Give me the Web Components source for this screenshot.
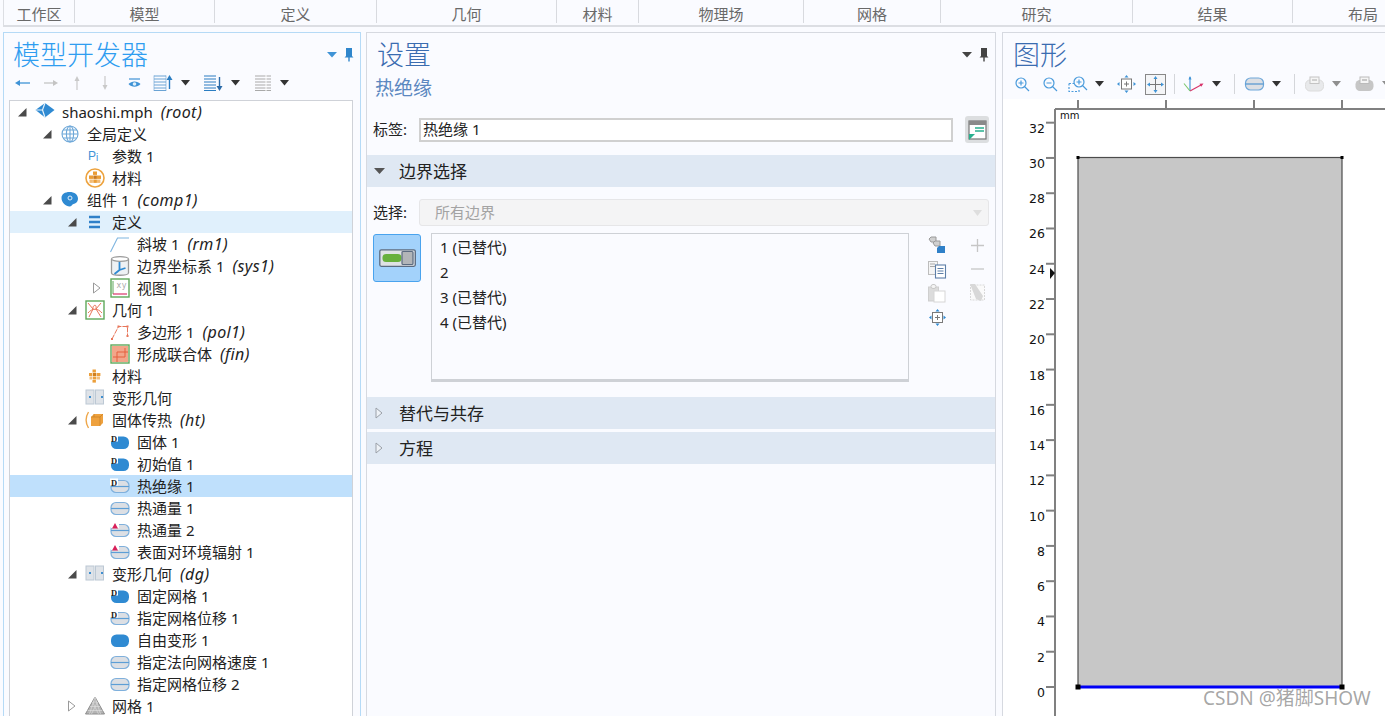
<!DOCTYPE html>
<html lang="zh-CN">
<head>
<meta charset="utf-8">
<title>模型开发器</title>
<style>
  html, body { margin: 0; height: 716px; overflow: hidden; background: #fafbff; }
  body { font: 15px "Noto Sans", "Noto Sans CJK SC", sans-serif; color: #222; position: relative; }
  .work { display: flex; gap: 5px; padding: 5px 0 0 3px; height: 684px; }
  .mark { position: absolute; left: 1203px; top: 683px; font-size: 19px; color: rgba(110,110,110,.62); white-space: nowrap; }
</style>
</head>
<body>
<x-ribbon></x-ribbon>
<div class="work">
  <x-panel heading="模型开发器" active style="width:358px">
    <x-iconbar slot="bar" items="back:15:14 fwd:14:14:14 up:10:14:14 down:10:14:18 eye:13:14:18 listup:20:16:12 drop:9:14:8 listdown:20:16:13 drop:9:14:8 listgray:16:16:15 drop:9:14:9"></x-iconbar>
    <x-tree>
      <x-node level="0" state="open" icon="doc">shaoshi.mph<span slot="tag">(root)</span></x-node>
      <x-node level="1" state="open" icon="globe">全局定义</x-node>
      <x-node level="2" icon="pi">参数 1</x-node>
      <x-node level="2" icon="matring">材料</x-node>
      <x-node level="1" state="open" icon="comp">组件 1<span slot="tag">(comp1)</span></x-node>
      <x-node level="2" state="open" icon="defs" sel="soft">定义</x-node>
      <x-node level="3" icon="ramp">斜坡 1<span slot="tag">(rm1)</span></x-node>
      <x-node level="3" icon="sys">边界坐标系 1<span slot="tag">(sys1)</span></x-node>
      <x-node level="3" state="closed" icon="view">视图 1</x-node>
      <x-node level="2" state="open" icon="geom">几何 1</x-node>
      <x-node level="3" icon="poly">多边形 1<span slot="tag">(pol1)</span></x-node>
      <x-node level="3" icon="union">形成联合体<span slot="tag">(fin)</span></x-node>
      <x-node level="2" icon="mat">材料</x-node>
      <x-node level="2" icon="deform">变形几何</x-node>
      <x-node level="2" state="open" icon="heat">固体传热<span slot="tag">(ht)</span></x-node>
      <x-node level="3" icon="dfill">固体 1</x-node>
      <x-node level="3" icon="dfill">初始值 1</x-node>
      <x-node level="3" icon="dbound" sel="strong">热绝缘 1</x-node>
      <x-node level="3" icon="bound">热通量 1</x-node>
      <x-node level="3" icon="rbound">热通量 2</x-node>
      <x-node level="3" icon="rbound">表面对环境辐射 1</x-node>
      <x-node level="2" state="open" icon="deform">变形几何<span slot="tag">(dg)</span></x-node>
      <x-node level="3" icon="dfill">固定网格 1</x-node>
      <x-node level="3" icon="dbound">指定网格位移 1</x-node>
      <x-node level="3" icon="fill">自由变形 1</x-node>
      <x-node level="3" icon="bound">指定法向网格速度 1</x-node>
      <x-node level="3" icon="bound">指定网格位移 2</x-node>
      <x-node level="2" state="closed" icon="mesh">网格 1</x-node>
    </x-tree>
  </x-panel>
  <x-panel heading="设置" tone="dark" style="width:630px;margin-right:1px">
    <x-settings></x-settings>
  </x-panel>
  <x-panel heading="图形" tone="dark" plain style="flex:1">
    <x-iconbar slot="bar" wide items="zoomin:14:14:12 zoomout:14:14:14 zoombox:19:16:11 drop:9:14:8 pan:19:18:13 extents:21:21:9 sep:1:20:8 axes:21:16:8 drop:9:14:8 sep:1:20:13 tbound:19:14:10 drop:9:14:8 sep:1:20:13 pgray:19:14:10 dropg:9:14:8 pdark:19:14:14 dropg:9:14:8"></x-iconbar>
    <x-plot></x-plot>
  </x-panel>
</div>
<div class="mark">CSDN @猪脚SHOW</div>

<script>
// all icons live here, drawn on a 20x20 box unless the entry says otherwise
const BOUND_BODY = `<rect x="1" y="4.500" width="18" height="12" rx="5" fill="#dcdfe4" stroke="#7fb0dc" stroke-width="1.200"/><path d="M1 10.500h18" stroke="#5d9ed6" stroke-width="1.200"/>`;
const FILL_BODY = `<rect x="1" y="4.500" width="18" height="12.500" rx="5.500" fill="#2f8ad2"/>`;
const D_MARK = `<rect x="0" y="2.500" width="8" height="7" fill="#fff"/><text x="1" y="9.500" font-family="Liberation Serif" font-weight="700" font-size="8.500" fill="#222">D</text>`;
const ICONS = {
  doc: `<path d="M10 1 19.500 8 10 15.500.5 8z" fill="#2f8ad2"/><path d="M.5 8 7.500 8 10 1M7.500 8 10 15.500" fill="none" stroke="#e6f2fb" stroke-width="1.200"/>`,
  globe: `<g fill="none" stroke="#6da7d8" stroke-width="1.100"><circle cx="10" cy="10" r="8"/><ellipse cx="10" cy="10" rx="3.600" ry="8"/><path d="M2 10h16M3.200 6h13.600M3.200 14h13.600M10 2v16"/></g>`,
  pi: `<text x="3" y="14" font-family="Liberation Sans" font-size="12" fill="#3f93d6">P</text><text x="11" y="15" font-family="Liberation Sans" font-size="10" fill="#3f93d6">i</text>`,
  matring: `<circle cx="10" cy="10" r="9" fill="#fff" stroke="#eda33f" stroke-width="1.600"/><g fill="#ea9c34"><rect x="8" y="3.500" width="4" height="3.400"/><rect x="4" y="7.500" width="4" height="3.400"/><rect x="8.300" y="7.500" width="3.600" height="3.400" fill="#c9791e"/><rect x="12" y="7.500" width="4" height="3.400"/><rect x="4.500" y="11.500" width="3.400" height="3.400" fill="#f2bb75"/><rect x="8.300" y="11.500" width="3.600" height="3.400"/><rect x="12" y="11.500" width="3.400" height="3.400" fill="#f2bb75"/></g>`,
  mat: `<g fill="#ec9f3a"><rect x="7.500" y="3.500" width="3.400" height="3"/><rect x="4" y="7" width="3.400" height="3"/><rect x="8" y="7" width="3.400" height="3" fill="#d07f1e"/><rect x="12" y="7" width="3.400" height="3"/><rect x="4.500" y="10.500" width="3" height="3" fill="#f3bf7e"/><rect x="8" y="10.500" width="3.400" height="3"/><rect x="12" y="10.500" width="3" height="3" fill="#f3bf7e"/><rect x="7.500" y="14" width="3.400" height="2.600"/></g>`,
  comp: `<path d="M1.500 8C1.500 4 5 2 9.500 2c5 0 8.500 2.700 8.500 6.500 0 3.500-2.500 5-4.500 5.500-1.500.4-2 2.500-4 2.500C6 16.500 1.500 12.500 1.500 8z" fill="#2f8ad2"/><rect x="8" y="6" width="4" height="4" rx="2" fill="none" stroke="#dcecf9" stroke-width="1"/>`,
  defs: `<path d="M4 5h11M4 10h11M4 15h11" stroke="#2f80c8" stroke-width="2.600"/>`,
  ramp: `<path d="M.5 18 7.500 4H19" fill="none" stroke="#7fb5e0" stroke-width="1.100"/>`,
  sys: `<path d="M1.500 3v14c0 3 17 3 17 0V3" fill="#eef1f4" stroke="#9a9a9a" stroke-width="1.300"/><ellipse cx="10" cy="3" rx="8.500" ry="2.300" fill="#fff" stroke="#9a9a9a" stroke-width="1.300"/><path d="M9.500 6v8M9.500 14l-5 4M9.500 14l6-2" stroke="#2f8ad2" stroke-width="1.800" fill="none"/>`,
  view: `<rect x="1" y="1" width="18" height="18" fill="#fff" stroke="#5fa85a" stroke-width="1.400"/><path d="M3 3v13" stroke="#5fa85a"/><path d="M3 16h14" stroke="#d8336a" stroke-width="1.200"/><text x="6.500" y="10" font-family="DejaVu Sans" font-size="8" letter-spacing=".5" fill="#aaa">xy</text>`,
  geom: `<rect x="1" y="1" width="18" height="18" fill="#fff" stroke="#5fa85a" stroke-width="1.400"/><path d="M3 3l5 6-4 8M16 3l-5 6 5 8M8 9c-.7-4 4-6 3 0M3 13c4-5 10-5 14 0" fill="none" stroke="#e8765a" stroke-width="1"/>`,
  poly: `<path d="M2 17 8.500 4.500H17.500V14" fill="none" stroke="#e8765a" stroke-width="1" stroke-dasharray="5 1"/><g fill="#e8765a"><rect x="1" y="16" width="2" height="2"/><rect x="7.500" y="3.500" width="2" height="2"/><rect x="16.500" y="3.500" width="2" height="2"/><rect x="16.500" y="13" width="2" height="2"/></g>`,
  union: `<rect x="1" y="1" width="18" height="18" fill="#fff" stroke="#5fa85a" stroke-width="1.400"/><rect x="2" y="2" width="16" height="16" fill="#f2a68a"/><path d="M3 13H15V4M7 18V8h11" fill="none" stroke="#e5603f" stroke-width="1"/>`,
  deform: `<rect x="1" y="2" width="8" height="14" fill="#dfe3e8" stroke="#bcc8d4"/><rect x="10.500" y="2" width="8" height="14" fill="#dfe3e8" stroke="#bcc8d4"/><rect x="4" y="8" width="2" height="2" fill="#3f8fd0"/><rect x="16" y="8" width="2" height="2" fill="#3f8fd0"/>`,
  heat: `<path d="M3.500 2C.5 7 .5 13 3.500 18" fill="none" stroke="#eea74a" stroke-width="1.400"/><path d="M6 7 9 4h9v9l-3 3H6z" fill="#eea13e" /><path d="M6 7h9v9M15 7l3-3M9 4v3" fill="none" stroke="#c77f22" stroke-width=".7"/>`,
  bound: BOUND_BODY,
  tbound: `<rect x=".5" y="1" width="18" height="12" rx="5" fill="#dcdfe4" stroke="#6fa8da" stroke-width="1.200"/><path d="M.5 7h18" stroke="#4f94d0" stroke-width="1.200"/>`,
  fill: FILL_BODY,
  dfill: FILL_BODY + D_MARK,
  dbound: BOUND_BODY + D_MARK,
  rbound: BOUND_BODY + `<rect x="1" y="3" width="8" height="5" fill="#fff"/><path d="M2 8.500 5 3l3 5.500z" fill="#d8205a"/>`,
  mesh: `<path d="M10 1 19.500 18H.5z" fill="#b4b4b4" stroke="#8d8d8d"/><path d="M7.500 6h5M5 10.500h10M2.500 14.500h15M10 1 4.500 18M10 1l5.500 17M7.500 6l6 12M12.500 6l-6 12" stroke="#e3e3e3" stroke-width=".6"/>`,

  back: `<path d="M2 7h13" stroke="#3f93d6" stroke-width="1.300"/><path d="M0 7l5-3v6z" fill="#3f93d6"/>`,
  fwd: `<path d="M0 7h12" stroke="#c4c4c4" stroke-width="1.300"/><path d="M14 7 9 4v6z" fill="#c4c4c4"/>`,
  up: `<path d="M5 2v12" stroke="#c9c9c9" stroke-width="1.200"/><path d="M5 0 2.500 5h5z" fill="#c9c9c9"/>`,
  down: `<path d="M5 0v12" stroke="#c9c9c9" stroke-width="1.200"/><path d="M5 14 2.500 9h5z" fill="#c9c9c9"/>`,
  eye: `<path d="M1 3h11" stroke="#3f93d6" stroke-width="1.200"/><path d="M.5 8c3-3.500 9-3.500 12 0-3 3.500-9 3.500-12 0z" fill="#3f93d6"/><circle cx="6.500" cy="8" r="1.800" fill="#dff0fb"/>`,
  listup: `<path d="M1 1h12M1 4h12M1 7h12M1 10h12M1 13h12M1 15.500h12" stroke="#6aa3d4" stroke-width="1"/><path d="M1 .5v15.500M13 .5v15.500" stroke="#6aa3d4" stroke-width=".6"/><path d="M16.500 4v10" stroke="#2a7dc2" stroke-width="1.400"/><path d="M16.500 0l-3 5h6z" fill="#2a7dc2"/>`,
  listdown: `<path d="M1 1h12M1 4h12M1 7h12M1 10h12M1 13h12M1 15.500h12" stroke="#2a7dc2" stroke-width="1.200"/><path d="M16.500 2v10" stroke="#2a6aa8" stroke-width="1.400"/><path d="M16.500 16l-3-5h6z" fill="#2a6aa8"/>`,
  listgray: `<path d="M0 1h16M0 4h16M0 7h16M0 10h16M0 13h16M0 15.500h16" stroke="#a9a9a9" stroke-width="1.200"/><path d="M11 0v16" stroke="#fff" stroke-width="1"/>`,
  drop: `<path d="M0 4h9L4.500 9.500z" fill="#333"/>`,
  dropg: `<path d="M0 4h9L4.500 9.500z" fill="#8f8f8f"/>`,
  dropblue: `<path d="M0 1h10L5 6.500z" fill="#3f93d6"/>`,
  dropdark: `<path d="M0 1h10L5 6.500z" fill="#444"/>`,
  pinblue: `<path d="M2 0h6v8l1.500 1.500H.5L2 8zM4.300 9h1.400v4.500H4.300z" fill="#2f86cc"/>`,
  pindark: `<path d="M2 0h6v8l1.500 1.500H.5L2 8zM4.300 9h1.400v4.500H4.300z" fill="#444"/>`,

  zoomin: `<g fill="none" stroke="#4a9bdc" stroke-width="1.200"><circle cx="6" cy="6" r="5"/><path d="M9.500 9.500 14 14M3.500 6h5M6 3.500v5"/></g>`,
  zoomout: `<g fill="none" stroke="#4a9bdc" stroke-width="1.200"><circle cx="6" cy="6" r="5"/><path d="M9.500 9.500 14 14M3.500 6h5"/></g>`,
  zoombox: `<g fill="none" stroke="#4a9bdc" stroke-width="1.200"><path d="M1 7.500h5M1 7.500v8h10v-3" stroke-dasharray="2 1.500"/><circle cx="11" cy="6" r="5"/><path d="M14.500 9.500 19 14M8.500 6h5M11 3.500v5"/></g>`,
  pan: `<rect x="4.500" y="4" width="10" height="10" fill="#fff" stroke="#777"/><path d="M7 9h5M9.500 6.500v5" stroke="#777"/><path d="M9.500 0 7.500 2.500h4zM9.500 18l-2-2.500h4zM0 9l2.500-2v4zM19 9l-2.500-2v4z" fill="#3f93d6"/>`,
  extents: `<rect x=".5" y=".5" width="20" height="20" fill="#f4f5f7" stroke="#888"/><path d="M10.500 4v13M4 10.500h13" stroke="#777"/><path d="M10.500 2 8.500 5h4zM10.500 19l-2-3h4zM2 10.500l3-2v4zM19 10.500l-3-2v4z" fill="#3f93d6"/>`,
  sep: `<path d="M.5 0v20" stroke="#d4d6da"/>`,
  axes: `<path d="M7 15V1" stroke="#3f93d6" stroke-width="1.100"/><path d="M7 0 5.500 3.500h3z" fill="#3f93d6"/><path d="M7 15 18 9" stroke="#d8336a" stroke-width="1.100"/><path d="M20.500 7.500l-4 .2 1.700 3z" fill="#d8336a"/><path d="M7 15 1 7.500" stroke="#7cc66c" stroke-width="1.100"/>`,
  pgray: `<rect x=".5" y="3" width="18" height="11" rx="4.500" fill="#e8e9eb" stroke="#dcdcdc"/><rect x="5" y="0" width="9" height="6.500" fill="#f5f5f5" stroke="#c4c4c4"/><path d="M7 3h5" stroke="#aaa"/>`,
  pdark: `<rect x=".5" y="3" width="18" height="11" rx="4.500" fill="#c6c6c6"/><rect x="5" y="0" width="9" height="6.500" fill="#f5f5f5" stroke="#bbb"/><path d="M7 3h5" stroke="#999"/>`,

  comment: `<rect x="3" y="3" width="17" height="18" fill="#fff" stroke="#777" stroke-width="1.200"/><rect x="3" y="3" width="17" height="4" fill="#8a8a8a"/><path d="M9 10h9M9 13h9" stroke="#28b08e" stroke-width="1.300"/><path d="M3 22v-6h6z" fill="#28b08e"/>`,
  toggle: `<rect x=".8" y=".8" width="35.500" height="16.500" rx="1.500" fill="#dfe2e4" stroke="#5b6b80" stroke-width="1.300"/><rect x="3.500" y="5" width="19" height="8" rx="3.500" fill="#68b03c"/><rect x="23" y="2.500" width="11" height="13" rx="1" fill="#b2b5b8" stroke="#5b6b80" stroke-width="1.200"/>`,
  stack: `<g stroke="#9a9a9a" fill="#d0d0d0"><path d="M1 3 3 1h5v5H3z"/><path d="M5 7l2-2h5v5H7z"/></g><path d="M9 12l2-2h6v7h-6l-2 0z" fill="#2f80c8"/>`,
  copy: `<rect x=".5" y=".5" width="9" height="13" fill="#f5f5f5" stroke="#bdbdbd"/><path d="M2 3h5M2 5.500h5" stroke="#aaa"/><rect x="7.500" y="4" width="10" height="13" fill="#fff" stroke="#5d7fa8" stroke-width="1.100"/><path d="M9.500 7.500h6M9.500 10h6M9.500 12.500h6" stroke="#5d7fa8"/>`,
  paste: `<rect x=".5" y="3" width="10" height="14" fill="#dcdcdc" stroke="#cfcfcf"/><rect x="3" y=".5" width="5" height="4" rx="2" fill="#f4f4f4" stroke="#c8c8c8"/><rect x="6" y="7" width="11" height="11" fill="#fff" stroke="#d6d6d6"/>`,
  plus: `<path d="M6.500 0v13M0 6.500h13" stroke="#c6c6c6" stroke-width="1.300"/>`,
  minus: `<path d="M0 2h13" stroke="#c6c6c6" stroke-width="1.300"/>`,
  wipe: `<rect x="1.500" y="1" width="14" height="15" fill="#fafafa" stroke="#d8d8d8" stroke-dasharray="2 1"/><path d="M1 0 6 0 14 12l-2 5-5-2z" fill="#d8d8d8"/>`,
  move: `<rect x="3.500" y="3.500" width="10" height="10" fill="#fff" stroke="#7a7a7a"/><path d="M6 8.500h5M8.500 6v5" stroke="#7a7a7a"/><path d="M8.500 0 6.500 2.500h4zM8.500 17l-2-2.500h4zM0 8.500l2.500-2v4zM17 8.500l-2.500-2v4z" fill="#2f8ad2"/>`
};

class XIco extends HTMLElement {
  connectedCallback() {
    const name = this.getAttribute("name");
    const w = +this.getAttribute("w") || 20;
    const h = +this.getAttribute("h") || 20;
    if (!this.shadowRoot) this.attachShadow({ mode: "open" });
    this.shadowRoot.innerHTML = `
      <style>:host { display: inline-flex; flex: none; } svg { display: block; overflow: visible; }</style>
      <svg width="${w}" height="${h}" viewBox="0 0 ${w} ${h}">${ICONS[name] || ""}</svg>`;
  }
}
customElements.define("x-ico", XIco);

class XRibbon extends HTMLElement {
  constructor() {
    super();
    this.attachShadow({ mode: "open" });
    const tabs = [["工作区",71],["模型",140],["定义",162],["几何",180],["材料",82],["物理场",165],["网格",137],["研究",192],["结果",160],["布局",140]];
    this.shadowRoot.innerHTML = `
      <style>
        :host { display: flex; height: 27px; box-sizing: border-box; margin-left: 3px; overflow: hidden;
                border-bottom: 2px solid #dcdee3; border-left: 1px solid #dcdee3; color: #696969; }
        div { box-sizing: border-box; height: 23px; line-height: 28px; text-align: center; border-right: 1px solid #d8dadf; flex: none; }
        div:last-child { border-right: 0; }
      </style>
      ${tabs.map(([t, w]) => `<div style="width:${w}px">${t}</div>`).join("")}`;
  }
}
customElements.define("x-ribbon", XRibbon);

class XPanel extends HTMLElement {
  constructor() {
    super();
    this.attachShadow({ mode: "open" });
  }
  connectedCallback() {
    const dark = this.getAttribute("tone") === "dark";
    const active = this.hasAttribute("active");
    const plain = this.hasAttribute("plain");
    this.shadowRoot.innerHTML = `
      <style>
        :host { display: flex; flex-direction: column; box-sizing: border-box; height: 700px; flex: none; overflow: hidden;
                border: 1px solid ${active ? "#b5daf6" : "#d6d9e0"}; ${plain ? "border-right: 0;" : ""} background: #fafbff; }
        .head { display: flex; align-items: center; height: 32px; padding: 6px 6px 0 ${dark ? 10 : 9}px; flex: none; }
        h2 { margin: 0; flex: 1; font-size: 27px; font-weight: 200; line-height: 32px;
             color: ${dark ? "#3a6cb0" : "#2f9df0"}; }
        x-ico { margin-left: 6px; }
      </style>
      <div class="head">
        <h2>${this.getAttribute("heading")}</h2>
        ${plain ? "" : `<x-ico name="${dark ? "dropdark" : "dropblue"}" w="10" h="8"></x-ico><x-ico name="${dark ? "pindark" : "pinblue"}" w="10" h="14" style="margin-left:7px"></x-ico>`}
      </div>
      <slot name="bar"></slot>
      <slot></slot>`;
  }
}
customElements.define("x-panel", XPanel);

class XIconbar extends HTMLElement {
  constructor() {
    super();
    this.attachShadow({ mode: "open" });
  }
  connectedCallback() {
    const items = this.getAttribute("items").split(" ").map(s => s.split(":"));
    const wide = this.hasAttribute("wide");
    this.shadowRoot.innerHTML = `
      <style>
        :host { display: flex; align-items: center; height: ${wide ? 22 : 24}px; padding-top: ${wide ? 2 : 0}px; padding-left: ${wide ? 0 : 11}px; flex: none; white-space: nowrap; }
      </style>
      ${items.map(([n, w, h, gap], i) => `<x-ico name="${n}" w="${w}" h="${h}" style="margin-left:${i ? gap : (wide ? 12 : 0)}px"></x-ico>`).join("")}`;
  }
}
customElements.define("x-iconbar", XIconbar);

class XTree extends HTMLElement {
  constructor() {
    super();
    this.attachShadow({ mode: "open" }).innerHTML = `
      <style>
        :host { display: block; margin: 5px 7px 0 5px; border: 1px solid #cfd2d8; background: #fff; overflow: hidden; flex: 1; box-sizing: border-box; }
      </style>
      <slot></slot>`;
  }
}
customElements.define("x-tree", XTree);

class XNode extends HTMLElement {
  constructor() {
    super();
    this.attachShadow({ mode: "open" });
  }
  connectedCallback() {
    const level = +this.getAttribute("level");
    const state = this.getAttribute("state");
    const sel = this.getAttribute("sel");
    const bg = sel === "soft" ? "#e0f0fc" : sel === "strong" ? "#bfe0fc" : "transparent";
    // rows with an italic tag have a taller line box, so they sit right without the nudge
    const tagged = this.querySelector("[slot=tag]");
    let arrow = "";
    if (state === "open") arrow = `<svg width="10" height="10"><path d="M9.500 1v8.500H1z" fill="#4a4a4a"/></svg>`;
    if (state === "closed") arrow = `<svg width="10" height="12"><path d="M1.500 1v10L8 6z" fill="#fff" stroke="#9a9a9a"/></svg>`;
    this.shadowRoot.innerHTML = `
      <style>
        :host { display: flex; align-items: center; height: 22px; background: ${bg}; padding-left: ${level * 25 + 7}px; white-space: nowrap; }
        .arrow { width: 18px; display: flex; align-items: center; flex: none; }
        x-ico { margin-right: 7px; }
        .label { margin-top: ${tagged ? 0 : -2}px; }
        ::slotted([slot=tag]) { font-style: italic; font-size: 16px; letter-spacing: .4px; margin-left: 8px; }
      </style>
      <span class="arrow">${arrow}</span>
      <x-ico name="${this.getAttribute("icon")}"></x-ico>
      <span class="label"><slot></slot><slot name="tag"></slot></span>`;
  }
}
customElements.define("x-node", XNode);

class XSection extends HTMLElement {
  constructor() {
    super();
    this.attachShadow({ mode: "open" });
  }
  connectedCallback() {
    const open = this.hasAttribute("open");
    this.shadowRoot.innerHTML = `
      <style>
        :host { display: flex; align-items: center; height: 32px; background: #dfe8f3; padding-left: 6px; font-size: 17px; }
        svg { margin-right: 14px; flex: none; }
        span { margin-top: -2px; }
      </style>
      <svg width="12" height="12">${open ? `<path d="M1 3h11L6.500 9z" fill="#555"/>` : `<path d="M3 1v10l6-5z" fill="#eef2f7" stroke="#9aa0a8"/>`}</svg>
      <span><slot></slot></span>`;
  }
}
customElements.define("x-section", XSection);

class XSettings extends HTMLElement {
  constructor() {
    super();
    this.attachShadow({ mode: "open" }).innerHTML = `
      <style>
        :host { display: block; font-size: 15px; }
        .sub { font-size: 19px; color: #5b87c0; height: 45px; line-height: 34px; padding-left: 8px; }
        .row { display: flex; align-items: center; padding: 0 6px; }
        .row label { width: 46px; flex: none; margin-top: -2px; }
        .name { height: 27px; margin-bottom: 12px; }
        .name .input { width: 534px; height: 24px; flex: none; box-sizing: border-box; border: 2px solid #d0d0d0; background: #fff; line-height: 18px; padding-left: 2px; }
        .note { margin-left: 12px; width: 24px; height: 27px; flex: none; box-sizing: border-box; background: #dcdee0; border-radius: 3px; display: flex; align-items: center; justify-content: center; }
        .pick { height: 27px; margin: 12px 0 7px; }
        .select { width: 570px; height: 27px; flex: none; box-sizing: border-box; border: 1px solid #e6e6e8; border-radius: 3px; background: #f4f4f5; color: #a3a3a3; padding-left: 15px; display: flex; justify-content: space-between; align-items: center; padding-right: 6px; }
        .select span { margin-top: -2px; }
        .sel { display: flex; height: 149px; padding-left: 6px; margin-bottom: 15px; }
        .btn { width: 48px; height: 48px; box-sizing: border-box; margin-top: 1px; background: #a3d2fb; border: 1px solid #49a3ee; border-radius: 3px; display: flex; align-items: center; justify-content: center; flex: none; }
        .list { width: 478px; flex: none; margin-left: 10px; box-sizing: border-box; border: 1px solid #ced1d6; border-bottom: 3px solid #ced1d6; padding: 1px 8px; color: #222; line-height: 25px; background: #fafbff; }
        .tools { display: grid; grid-template-columns: 40px 40px; grid-auto-rows: 24px; justify-items: center; align-items: center; margin-left: 8px; width: 80px; flex: none; align-content: start; }
        x-section { margin-bottom: 3px; }
      </style>
      <div class="sub">热绝缘</div>
      <div class="row name">
        <label>标签:</label><div class="input">热绝缘 1</div>
        <div class="note"><x-ico name="comment" w="23" h="23"></x-ico></div>
      </div>
      <x-section open>边界选择</x-section>
      <div class="row pick">
        <label>选择:</label>
        <div class="select"><span>所有边界</span><svg width="9" height="6"><path d="M0 0h9L4.500 6z" fill="#dedede"/></svg></div>
      </div>
      <div class="sel">
        <div class="btn"><x-ico name="toggle" w="37" h="18"></x-ico></div>
        <div class="list">1 (已替代)<br>2<br>3 (已替代)<br>4 (已替代)</div>
        <div class="tools">
          <x-ico name="stack" w="18" h="18"></x-ico><x-ico name="plus" w="13" h="13"></x-ico>
          <x-ico name="copy" w="18" h="17"></x-ico><x-ico name="minus" w="13" h="4"></x-ico>
          <x-ico name="paste" w="18" h="18"></x-ico><x-ico name="wipe" w="17" h="18"></x-ico>
          <x-ico name="move" w="17" h="17"></x-ico>
        </div>
      </div>
      <x-section>替代与共存</x-section>
      <x-section>方程</x-section>`;
  }
}
customElements.define("x-settings", XSettings);

class XPlot extends HTMLElement {
  constructor() {
    super();
    this.attachShadow({ mode: "open" });
    // coordinates are relative to the plot's own corner at (1003, 99)
    const ox = 1003, oy = 99;
    const X = v => v - ox, Y = v => v - oy;
    let ticks = "";
    for (let i = 0; i <= 16; i++) {
      const y = Y(687 - i * 35.27);
      ticks += `<path d="M${X(1046)} ${y}h9" stroke="#808080" stroke-width="2"/>
        <text x="${X(1045)}" y="${y + 10}" text-anchor="end" font-size="12.500">${i * 2}</text>`;
    }
    for (const x of [1078, 1166, 1254, 1342]) ticks += `<path d="M${X(x)} 1v9" stroke="#808080" stroke-width="2"/>`;
    const L = X(1078), R = X(1342), T = Y(157.500), B = Y(687);
    this.shadowRoot.innerHTML = `
      <style>
        :host { display: block; flex: 1; background: #fff; margin-top: 4px; overflow: hidden; }
        svg { display: block; font-family: "DejaVu Sans", sans-serif; fill: #111; }
      </style>
      <svg width="382" height="620">
        <path d="M${X(1055)} ${Y(109)}H400M${X(1055)} ${Y(109)}V620" fill="none" stroke="#808080" stroke-width="2"/>
        ${ticks}
        <text x="${X(1060)}" y="${Y(119)}" font-size="10">mm</text>
        <rect x="${L}" y="${T}" width="${R - L}" height="${B - T}" fill="#c7c7c7" stroke="#4c4c4c" stroke-width="1.200"/>
        <path d="M${L} ${B}H${R}" stroke="#0000f5" stroke-width="3"/>
        <path d="M${X(1050)} ${Y(268)}l5 5-5 6z" fill="#111"/>
        <g fill="#000">
          <rect x="${L - 1.500}" y="${T - 1.500}" width="3" height="3"/><rect x="${R - 1.500}" y="${T - 1.500}" width="3" height="3"/>
          <rect x="${L - 2.500}" y="${B - 2.500}" width="5" height="5"/><rect x="${R - 2.500}" y="${B - 2.500}" width="5" height="5"/>
        </g>
      </svg>`;
  }
}
customElements.define("x-plot", XPlot);
</script>
</body>
</html>
